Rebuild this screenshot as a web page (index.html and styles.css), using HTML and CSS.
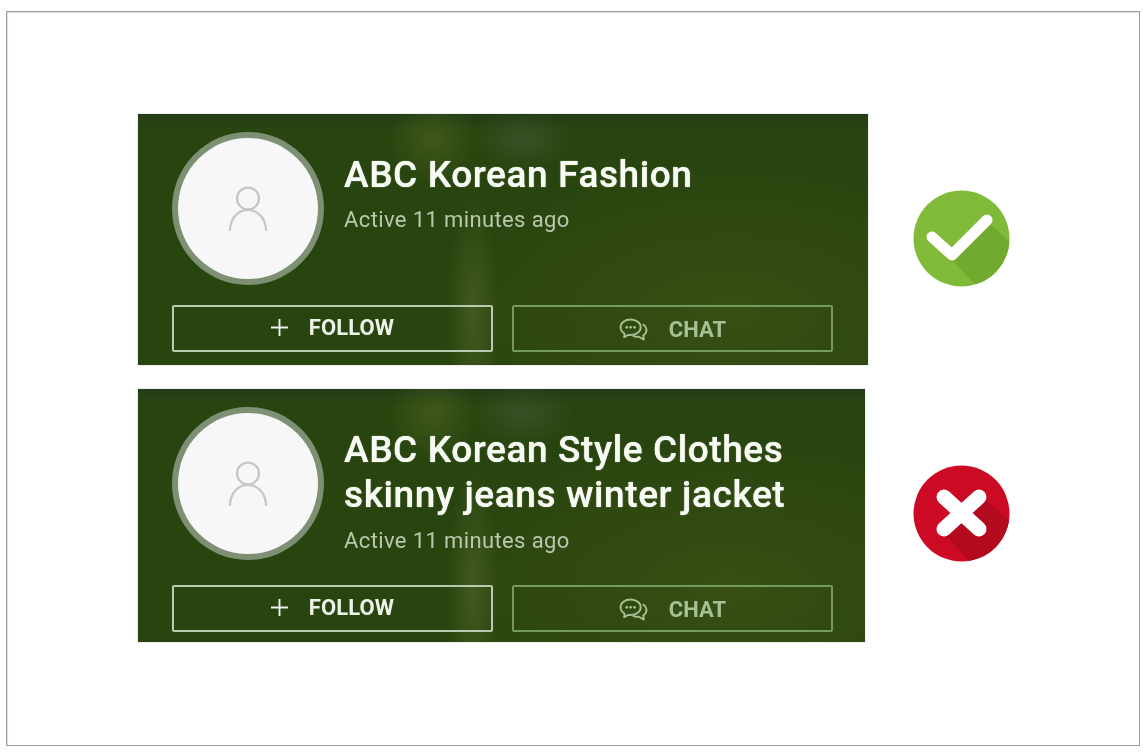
FILE: index.html
```html
<!DOCTYPE html>
<html lang="en">

<head>
    <meta charset="UTF-8">
    <meta name="viewport" content="width=device-width, initial-scale=1.0">
    <title>Shop name comparison</title>
    <link rel="stylesheet" href="styles.css">
</head>

<body>
    <div class="frame">
        <div class="row">
            <div class="card">
                <div class="card-top">
                    <div class="avatar">
                        <svg class="avatar-icon" viewBox="0 0 44 50">
                            <circle cx="22" cy="14" r="11.5" />
                            <path d="M3 47c1-13 9-21 19-21s18 8 19 21" />
                        </svg>
                    </div>
                    <div class="info">
                        <div class="shop-name">ABC Korean Fashion</div>
                        <div class="active">Active 11 minutes ago</div>
                    </div>
                </div>
                <div class="actions">
                    <div class="btn btn-follow">
                        <svg class="btn-icon" viewBox="0 0 18 18">
                            <path d="M9 0v18M0 9h18" />
                        </svg>
                        <span>FOLLOW</span>
                    </div>
                    <div class="btn btn-chat">
                        <svg class="btn-icon chat-icon" viewBox="0 0 30 24">
                            <path d="M12 1.500c-6 0-10.500 3.600-10.500 8.200 0 2.800 1.700 5.200 4.300 6.700l-.6 3.600 4.600-2.500c.7.1 1.400.2 2.200.2 6 0 10.500-3.600 10.500-8s-4.500-8.200-10.500-8.200z" />
                            <path d="M24.500 6.500c2.500 1.400 4 3.600 4 6.100 0 2.300-1.200 4.300-3.300 5.700l.6 4.200-5.300-2.900c-2.200.2-4.500-.2-6.300-1.200" />
                            <circle class="dot" cx="8" cy="9.700" r="1.400" />
                            <circle class="dot" cx="12" cy="9.700" r="1.400" />
                            <circle class="dot" cx="16" cy="9.700" r="1.400" />
                        </svg>
                        <span>CHAT</span>
                    </div>
                </div>
            </div>
            <svg class="mark" viewBox="0 0 97 97">
                <defs>
                    <clipPath id="clip-good">
                        <circle cx="48.500" cy="48.500" r="48" />
                    </clipPath>
                </defs>
                <circle cx="48.500" cy="48.500" r="48" fill="#80ba38" />
                <polygon points="39,70 76,33 100,55 100,100 68,100" fill="#72a92f" clip-path="url(#clip-good)" />
                <path d="M19 47l20 18 35-35" fill="none" stroke="#fff" stroke-width="11" stroke-linecap="round" stroke-linejoin="round" />
            </svg>
        </div>

        <div class="row row-bad">
            <div class="card card-long">
                <div class="card-top">
                    <div class="avatar">
                        <svg class="avatar-icon" viewBox="0 0 44 50">
                            <circle cx="22" cy="14" r="11.5" />
                            <path d="M3 47c1-13 9-21 19-21s18 8 19 21" />
                        </svg>
                    </div>
                    <div class="info">
                        <div class="shop-name">ABC Korean Style Clothes<br>skinny jeans winter jacket</div>
                        <div class="active">Active 11 minutes ago</div>
                    </div>
                </div>
                <div class="actions">
                    <div class="btn btn-follow">
                        <svg class="btn-icon" viewBox="0 0 18 18">
                            <path d="M9 0v18M0 9h18" />
                        </svg>
                        <span>FOLLOW</span>
                    </div>
                    <div class="btn btn-chat">
                        <svg class="btn-icon chat-icon" viewBox="0 0 30 24">
                            <path d="M12 1.500c-6 0-10.500 3.600-10.500 8.200 0 2.800 1.700 5.200 4.300 6.700l-.6 3.600 4.600-2.500c.7.1 1.400.2 2.200.2 6 0 10.500-3.600 10.500-8s-4.500-8.200-10.500-8.200z" />
                            <path d="M24.500 6.500c2.500 1.400 4 3.600 4 6.100 0 2.300-1.200 4.300-3.300 5.700l.6 4.200-5.300-2.900c-2.200.2-4.500-.2-6.300-1.200" />
                            <circle class="dot" cx="8" cy="9.700" r="1.400" />
                            <circle class="dot" cx="12" cy="9.700" r="1.400" />
                            <circle class="dot" cx="16" cy="9.700" r="1.400" />
                        </svg>
                        <span>CHAT</span>
                    </div>
                </div>
            </div>
            <svg class="mark" viewBox="0 0 97 97">
                <defs>
                    <clipPath id="clip-bad">
                        <circle cx="48.500" cy="48.500" r="48" />
                    </clipPath>
                </defs>
                <circle cx="48.500" cy="48.500" r="48" fill="#cc0a24" />
                <polygon points="68,30 100,60 100,100 60,100 30,68" fill="#b30a20" clip-path="url(#clip-bad)" />
                <path d="M31 32l35 32M66 32L31 64" fill="none" stroke="#fff" stroke-width="15" stroke-linecap="round" />
            </svg>
        </div>
    </div>
</body>

</html>
```

FILE: styles.css
```css
* {
    margin: 0;
    padding: 0;
    box-sizing: border-box;
    font-family: Roboto, 'Liberation Sans', sans-serif;
}

body {
    background-color: #ffffff;
    width: 1143px;
    height: 754px;
    padding: 11px 3px 8px 6px;
    overflow: hidden;
}

.frame {
    height: 735px;
    border: 1px solid #9b9b9b;
    box-shadow: inset 1px 1px 1px #dddddd;
    padding: 102px 0 0 131px;
    display: flex;
    flex-direction: column;
    gap: 24px;
}

.row {
    display: flex;
    align-items: center;
}

.card {
    width: 730px;
    height: 251px;
    padding: 18px 35px 0 34px;
    color: #ffffff;
    background-color: #29450f;
    background-image:
        radial-gradient(ellipse 45px 45px at 295px 25px, rgba(105, 125, 45, 0.35), transparent),
        radial-gradient(ellipse 50px 30px at 385px 25px, rgba(85, 105, 85, 0.35), transparent),
        radial-gradient(ellipse 26px 120px at 335px 200px, rgba(120, 140, 75, 0.28), transparent),
        radial-gradient(ellipse 300px 150px at 590px 200px, rgba(75, 90, 25, 0.45), transparent),
        linear-gradient(180deg, #233c17 0, rgba(35, 60, 23, 0) 16px);
    box-shadow: 0 0 1px rgba(60, 70, 50, 0.5);
    filter: blur(0.5px);
}

.card-long {
    width: 727px;
    height: 253px;
    padding-right: 32px;
}

.card-top {
    display: flex;
    gap: 20px;
    height: 153px;
    margin-bottom: 20px;
}

.card-long .card-top {
    margin-bottom: 25px;
}

.avatar {
    width: 152px;
    height: 153px;
    flex-shrink: 0;
    border-radius: 50%;
    border: 6px solid #7d9074;
    background-color: #f7f7f8;
    display: flex;
    align-items: center;
    justify-content: center;
}

.avatar-icon {
    width: 42px;
    height: 48px;
    fill: none;
    stroke: #c6c6c6;
    stroke-width: 2.400;
    stroke-linecap: round;
}

.info {
    padding-top: 20px;
}

.shop-name {
    font-size: 37px;
    font-weight: 500;
    letter-spacing: 0.6px;
    line-height: 45px;
    color: #f8fbf3;
    text-shadow: 0 0 1px #f8fbf3;
}

.active {
    margin-top: 11px;
    font-size: 22px;
    letter-spacing: 0.38px;
    line-height: 24px;
    color: #b9c8ad;
}

.card-long .active {
    margin-top: 12px;
}

.actions {
    display: flex;
    gap: 19px;
}

.btn {
    flex: 1;
    height: 47px;
    border-radius: 2px;
    display: flex;
    align-items: center;
    justify-content: center;
    gap: 21px;
    font-size: 22px;
    font-weight: 700;
    letter-spacing: 0.1px;
}

.btn-follow {
    border: 2px solid #b9cbae;
    color: #eef3e9;
    padding-bottom: 3px;
}

.btn-chat {
    border: 2px solid #759a5f;
    color: #a3c294;
    padding-top: 1px;
}

.btn-icon {
    flex-shrink: 0;
    width: 17px;
    height: 17px;
    fill: none;
    stroke: currentColor;
    stroke-width: 2;
}

.chat-icon {
    width: 29px;
    height: 23px;
    stroke-width: 2;
    stroke-linejoin: round;
}

.chat-icon .dot {
    fill: currentColor;
    stroke: none;
}

.mark {
    width: 97px;
    height: 97px;
    margin-left: 45px;
    margin-bottom: 2px;
    flex-shrink: 0;
    filter: blur(0.5px);
}

.row-bad .mark {
    margin-left: 48px;
    margin-bottom: 4px;
}
```
